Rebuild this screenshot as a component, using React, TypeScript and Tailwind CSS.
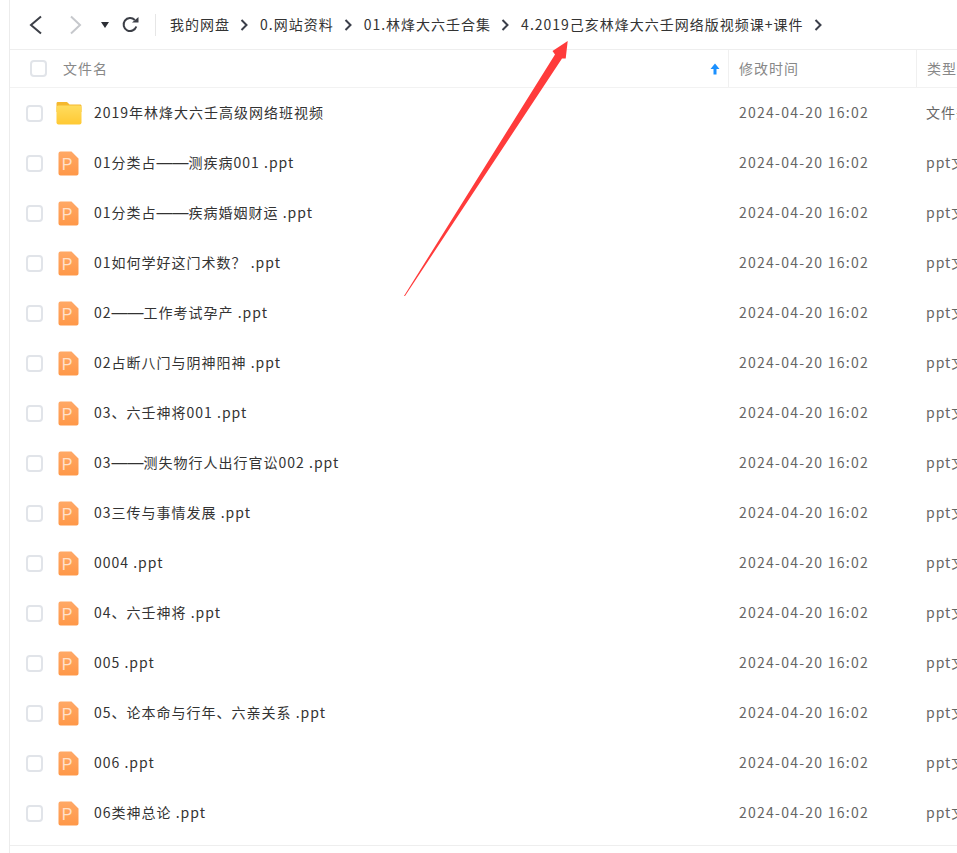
import React from 'react';

const files = [
  '01分类占——测疾病001 .ppt',
  '01分类占——疾病婚姻财运 .ppt',
  '01如何学好这门术数？ .ppt',
  '02——工作考试孕产 .ppt',
  '02占断八门与阴神阳神 .ppt',
  '03、六壬神将001 .ppt',
  '03——测失物行人出行官讼002 .ppt',
  '03三传与事情发展 .ppt',
  '0004 .ppt',
  '04、六壬神将 .ppt',
  '005 .ppt',
  '05、论本命与行年、六亲关系 .ppt',
  '006 .ppt',
  '06类神总论 .ppt',
];

const crumbs = ['我的网盘', '0.网站资料', '01.林烽大六壬合集', '4.2019己亥林烽大六壬网络版视频课+课件'];

const FolderIcon = () => (
  <svg width="26" height="24" viewBox="0 0 26 24" className="shrink-0">
    <defs>
      <linearGradient id="folderFill" x1="0" y1="0" x2="0" y2="1">
        <stop offset="0" stopColor="#ffdc5e" />
        <stop offset="1" stopColor="#ffc933" />
      </linearGradient>
    </defs>
    <path d="M2 1h8c1 0 1.600.4 2.300 1.200L13.500 3.500H24c1 0 1.500.5 1.500 1.500v6H.5V2.500C.5 1.500 1 1 2 1z" fill="#f5b82e" />
    <rect x="0.500" y="4.500" width="25" height="19" rx="2" fill="url(#folderFill)" />
  </svg>
);

const PptIcon = () => (
  <svg width="21" height="25" viewBox="0 0 21 25" className="shrink-0">
    <defs>
      <linearGradient id="pptFill" x1="0" y1="0" x2="0" y2="1">
        <stop offset="0" stopColor="#ffa866" />
        <stop offset="1" stopColor="#ff9848" />
      </linearGradient>
    </defs>
    <path d="M2.500.5h11l7 7v15a2 2 0 0 1-2 2h-16a2 2 0 0 1-2-2v-20a2 2 0 0 1 2-2z" fill="url(#pptFill)" />
    <text x="9.500" y="19" textAnchor="middle" fontSize="16" fontWeight="400" fill="#ffe0c9" fontFamily="Liberation Sans, sans-serif">P</text>
  </svg>
);

const Chevron = () => (
  <svg width="9" height="12" viewBox="0 0 9 12" className="shrink-0">
    <path d="M1.500 1l5 5-5 5" fill="none" stroke="#3b3f4a" strokeWidth="2" />
  </svg>
);

const Checkbox = () => (
  <span className="block w-[17px] h-[17px] shrink-0 rounded-[4px] border-2 border-[#e1e4e9] bg-white" />
);

export default function App() {
  return (
    <div lang="zh-CN" className="relative w-[957px] h-[853px] overflow-hidden bg-white text-[14px] tracking-[1px] text-[#333] font-['Noto_Sans_CJK_SC','Noto_Sans',sans-serif]">
      <div className="ml-[9px] h-full border-l border-[#ececec]">
        {/* Toolbar */}
        <div className="flex items-center h-[50px] border-b border-[#eeeeee] pl-[17px]">
          <svg width="16" height="20" viewBox="0 0 16 20" className="shrink-0">
            <path d="M14 1.500L4 10l10 8.500" fill="none" stroke="#3c3f47" strokeWidth="2" />
          </svg>
          <svg width="14" height="20" viewBox="0 0 14 20" className="ml-[26px] shrink-0">
            <path d="M2 1.500l9 8.500-9 8.500" fill="none" stroke="#c6c8cc" strokeWidth="2" />
          </svg>
          <svg width="8" height="6" viewBox="0 0 8 6" className="ml-[18px] shrink-0">
            <path d="M0 0h8L4 6z" fill="#2d2f36" />
          </svg>
          <svg width="17" height="17" viewBox="0 0 17 17" className="ml-[13px] shrink-0">
            <path d="M14.300 10.500A6.500 6.500 0 1 1 12.800 4" fill="none" stroke="#3c3f47" strokeWidth="2" />
            <path d="M10 6.500h6.500V1z" fill="#3c3f47" />
          </svg>
          <span className="ml-[16px] h-[22px] border-l border-[#e6e6e6]" />
          <div className="ml-[14px] flex items-center whitespace-nowrap">
            {crumbs.map((c) => (
              <React.Fragment key={c}>
                <span className="pb-[1px]">{c}</span>
                <span className="ml-[10px] mr-[11px]"><Chevron /></span>
              </React.Fragment>
            ))}
          </div>
        </div>

        {/* Column header */}
        <div className="flex items-stretch h-[38px] border-b border-[#f2f2f2] text-[#888]">
          <div className="flex items-center w-[719px] shrink-0 pl-[20px] pr-[8px] border-r border-[#f0f0f0]">
            <Checkbox />
            <span className="ml-[16px] flex-1">文件名</span>
            <svg width="10" height="12" viewBox="0 0 10 12">
              <path d="M5 .5L9.500 6H6.500v5.500h-3V6H.5z" fill="#1a90ff" />
            </svg>
          </div>
          <div className="flex items-center w-[188px] shrink-0 pl-[10px] border-r border-[#f0f0f0]">修改时间</div>
          <div className="flex items-center pl-[10px] whitespace-nowrap">类型</div>
        </div>

        {/* Rows */}
        <div className="border-b border-[#eeeeee] pb-[7px]">
          <Row name="2019年林烽大六壬高级网络班视频" type="文件夹" folder />
          {files.map((f) => (
            <Row key={f} name={f} type="ppt文件" />
          ))}
        </div>
      </div>

      {/* Red annotation arrow */}
      <svg width="957" height="853" viewBox="0 0 957 853" className="absolute inset-0 pointer-events-none">
        <polygon points="404,296 555,54.500 552.500,51 567.700,41 565.700,58.500 562,58.500 405,296" fill="#ff3b3b" />
      </svg>
    </div>
  );
}

function Row({ name, type, folder }: { name: string; type: string; folder?: boolean }) {
  const [before, after] = name.split('——');
  return (
    <div className="flex items-center h-[50px]">
      <div className="flex items-center w-[719px] shrink-0 pl-[16px]">
        <Checkbox />
        <div className="w-[51px] flex justify-center">{folder ? <FolderIcon /> : <PptIcon />}</div>
        <span className="whitespace-nowrap pb-[2px]">
          {after === undefined ? name : (
            <>
              {before}
              <span className="font-['Liberation_Sans',sans-serif] text-[16px] leading-none tracking-normal">——</span>
              {after}
            </>
          )}
        </span>
      </div>
      <div className="w-[188px] shrink-0 pl-[10px] pb-[2px] text-[#666] tracking-[1.250px]">2024-04-20 16:02</div>
      <div className="pl-[9px] pb-[2px] whitespace-nowrap text-[#666]">{type}</div>
    </div>
  );
}
